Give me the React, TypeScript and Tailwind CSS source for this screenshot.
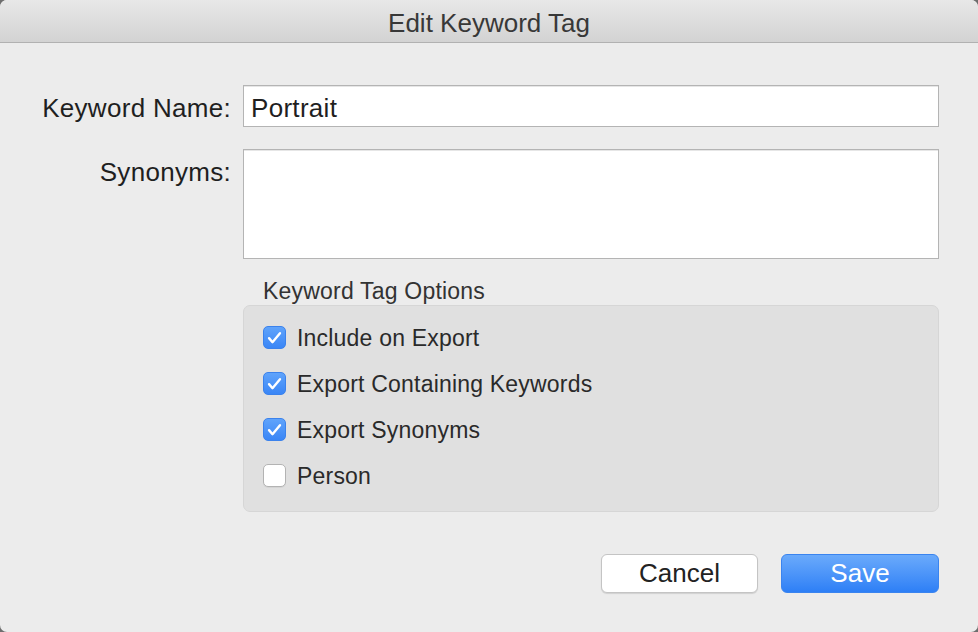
import React, { useState } from 'react';

const font = { fontFamily: '"Liberation Sans", Arial, sans-serif' };

type Option = { id: string; label: string; checked: boolean };

const CheckBox: React.FC<{ checked: boolean }> = ({ checked }) =>
  checked ? (
    <div className="w-[23px] h-[23px] rounded-[5px] bg-gradient-to-b from-[#5fa3fb] to-[#3a86f6] border border-[#3b82ec] flex items-center justify-center shrink-0">
      <svg width="23" height="23" viewBox="0 0 23 23" fill="none">
        <path d="M5.5 12.2 L9.3 16.6 L17.5 6.8" stroke="white" strokeWidth={2.6} strokeLinecap="round" strokeLinejoin="round" />
      </svg>
    </div>
  ) : (
    <div className="w-[23px] h-[23px] rounded-[5px] bg-white border border-[#b3b3b3] shadow-[0_1px_0_rgba(0,0,0,0.05)] shrink-0" />
  );

export default function App() {
  const [options, setOptions] = useState<Option[]>([
    { id: 'export', label: 'Include on Export', checked: true },
    { id: 'containing', label: 'Export Containing Keywords', checked: true },
    { id: 'synonyms', label: 'Export Synonyms', checked: true },
    { id: 'person', label: 'Person', checked: false },
  ]);

  const toggle = (id: string) =>
    setOptions(opts => opts.map(o => (o.id === id ? { ...o, checked: !o.checked } : o)));

  return (
    <div className="w-[978px] h-[632px] bg-[#6e6e6e] overflow-hidden" style={font}>
      <div className="w-full h-full bg-[#ececec] rounded-[7px] overflow-hidden flex flex-col">
        {/* Title bar */}
        <div className="h-[43px] shrink-0 bg-gradient-to-b from-[#e8e8e8] to-[#d3d3d3] border-b border-[#b1b1b1] flex items-center justify-center pt-[5px]">
          <span className="text-[26px] leading-[29px] text-[#383838]">Edit Keyword Tag</span>
        </div>

        {/* Form */}
        <div className="flex-1 flex flex-col pr-[39px] pt-[42px]">
          <div className="grid grid-cols-[231px_1fr] gap-x-3 gap-y-[22px]">
            <div className="text-right text-[26px] leading-[29px] pt-[9px] tracking-[0.3px] text-[#1f1f1f]">Keyword Name:</div>
            <div className="h-[42px] bg-white border border-[#b4b4b4] px-[7px] pt-[8px] text-[26px] leading-[29px] tracking-[0.3px] text-[#1f1f1f] shadow-[inset_0_1px_0_#e6e6e6]">
              Portrait
            </div>

            <div className="text-right text-[26px] leading-[29px] pt-[9px] tracking-[0.3px] text-[#1f1f1f]">Synonyms:</div>
            <div className="h-[110px] bg-white border border-[#b4b4b4] shadow-[inset_0_1px_0_#e6e6e6]" />
          </div>

          <div className="ml-[243px] mt-[19px]">
            <div className="pl-[20px] text-[23px] leading-[27px] tracking-[0.2px] text-[#333333]">Keyword Tag Options</div>
            <div className="h-[207px] bg-[#e0e0e0] border border-[#d6d6d6] rounded-[7px] pl-[19px] pt-[20px] flex flex-col gap-[23px]">
              {options.map(o => (
                <div key={o.id} className="flex items-center gap-[11px] h-[23px] cursor-default" onClick={() => toggle(o.id)}>
                  <CheckBox checked={o.checked} />
                  <span className="text-[23px] leading-[23px] pt-[2px] tracking-[0.2px] text-[#2a2a2a]">{o.label}</span>
                </div>
              ))}
            </div>
          </div>

          <div className="flex justify-end gap-[23px] mt-[42px]">
            <button className="w-[157px] h-[39px] bg-white border border-[#c4c4c4] rounded-[6px] shadow-[0_1px_1px_rgba(0,0,0,0.12)] text-[26px] leading-[29px] text-[#222222]">
              Cancel
            </button>
            <button className="w-[158px] h-[39px] rounded-[6px] bg-gradient-to-b from-[#6aaafb] to-[#2d7ff6] border border-[#3a84ef] text-[26px] leading-[29px] text-white">
              Save
            </button>
          </div>
        </div>
      </div>
    </div>
  );
}
